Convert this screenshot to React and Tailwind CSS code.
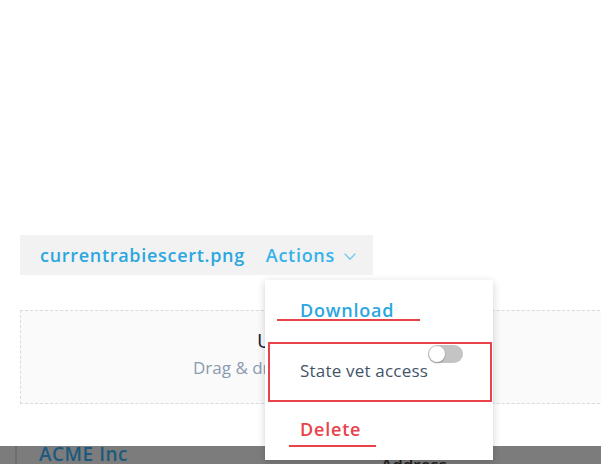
function Toggle() {
  return (
    <div className="w-[35px] h-[18px] rounded-full bg-[#c4c4c4] flex items-center px-[1px]">
      <div className="w-[16px] h-[16px] rounded-full bg-white shadow-[0_1px_2px_rgba(0,0,0,0.3)]" />
    </div>
  );
}

export default function App() {
  return (
    <div className="relative w-[601px] h-[464px] overflow-hidden bg-white font-['Open_Sans',sans-serif]">
      <div className="h-[235px]" />

      {/* file header */}
      <div className="ml-[20px] w-[353px] h-[40px] bg-[#f2f2f2] flex items-center pl-[20px]">
        <span className="text-[18px] font-semibold text-[#2aa7e0] tracking-[0.7px]">currentrabiescert.png</span>
        <span className="ml-[21px] text-[18px] font-semibold text-[#36b3ea] tracking-[0.7px]">Actions</span>
        <svg className="ml-[9px] mt-[3px]" width="12" height="7" viewBox="0 0 12 7" fill="none">
          <polyline points="0.6,0.6 6,6.2 11.4,0.6" stroke="#6cc6ee" strokeWidth="1.3" />
        </svg>
      </div>

      {/* drop zone */}
      <div className="mt-[35px] ml-[20px] w-[600px] h-[94px] border border-dashed border-[#d5dbe2] bg-[#fafafa] flex flex-col items-start pt-[16px]">
        <div className="ml-[236px] text-[20px] text-[#14223d] leading-[28px]">Upload a file</div>
        <div className="ml-[172px] text-[17px] text-[#8a9bb0] leading-[24px] mt-[1px]">Drag &amp; drop a file here or browse</div>
      </div>

      {/* table row under overlay */}
      <div className="absolute left-0 right-0 top-[446px] h-[20px] bg-[#7c7c7c] flex items-start">
        <div className="ml-[15px] w-[2px] h-full bg-[#6e6e6e]" />
        <span className="ml-[22px] -mt-[4px] text-[19px] font-semibold text-[#1b5a7e] tracking-[0.5px] leading-[24px]">ACME Inc</span>
        <span className="ml-[253px] mt-[7px] text-[17px] font-semibold text-[#222] leading-[24px]">Address</span>
      </div>

      {/* actions menu */}
      <div className="absolute left-[265px] top-[280px] w-[228px] h-[180px] bg-white shadow-[0_2px_8px_rgba(0,0,0,0.18)] flex flex-col">
        <div className="relative h-[62px] pl-[35px] pt-[17px]">
          <span className="text-[18px] font-semibold text-[#2aa7e0] tracking-[0.8px]">Download</span>
          <div className="absolute left-[12px] top-[39px] w-[143px] h-[2px] bg-[#e8424a]" />
        </div>
        <div className="relative ml-[3px] mr-[1px] h-[60px] border-2 border-[#e8424a] pl-[30px] pt-[14px]">
          <span className="text-[17px] text-[#44546a] tracking-[0.2px]">State vet access</span>
          <div className="absolute left-[158px] top-[1px]">
            <Toggle />
          </div>
        </div>
        <div className="relative flex-1 pl-[35px] pt-[14px]">
          <span className="text-[18px] font-semibold text-[#e8424a] tracking-[0.8px]">Delete</span>
          <div className="absolute left-[24px] top-[43px] w-[87px] h-[2px] bg-[#e8424a]" />
        </div>
      </div>
    </div>
  );
}
